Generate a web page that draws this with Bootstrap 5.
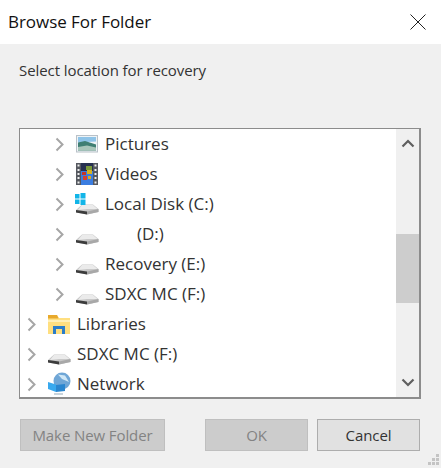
<!DOCTYPE html>
<html lang="en">
<head>
<meta charset="utf-8">
<title>Browse For Folder</title>
<link href="https://cdn.jsdelivr.net/npm/bootstrap@5.3.0/dist/css/bootstrap.min.css" rel="stylesheet">
<style>
html,body{height:100%;}
body{background:#f0f0f0;font-family:"Open Sans","Noto Sans",sans-serif;color:#222;overflow:hidden;}
.dlg{width:441px;height:468px;}
.titlebar{height:44px;background:#fff;padding:0 15px 0 8px;}
.titletext{font-size:17px;color:#111;letter-spacing:-.05px;}
.prompt{font-size:15px;margin:18px 0 0 19px;height:66px;line-height:17px;color:#333;letter-spacing:-.08px;}
.treebox{margin-left:19px;width:402px;height:271px;background:#fff;border:1px solid #8c8c8c;border-bottom-width:2px;border-right-width:2px;}
.treelist{width:376px;}
.treerow{height:30px;font-size:17px;color:#333;white-space:nowrap;}
.lvl0{padding-left:7px;}
.lvl1{padding-left:35px;}
.chev{width:9px;height:15px;flex:none;margin-right:11px;}
.ico{width:24px;height:24px;flex:none;margin-right:6px;}
.gap-d{padding-left:32px;}
.sbar{width:23px;background:#f0f0f0;}
.sarrow{height:30px;}
.strack{height:209px;}
.sthumb{height:69px;margin-top:75px;background:#cdcdcd;}
.footer{padding:20px 21px 0 20px;}
.dbtn{height:32px;border-radius:0;font-size:15px;padding:0;line-height:30px;letter-spacing:-.1px;}
.dbtn:disabled{background:#cccccc;border:1px solid #bfbfbf;color:#838383;opacity:1;}
.wide{width:145px;margin-right:40px;}
.mid{width:103px;margin-right:9px;}
.cancel{background:#e1e1e1;border:1px solid #adadad;color:#333;}
.grip{position:absolute;right:1px;bottom:2px;}
</style>
</head>
<body class="m-0">
<div class="dlg position-relative d-flex flex-column">
  <div class="titlebar d-flex align-items-center justify-content-between">
    <span class="titletext">Browse For Folder</span>
    <svg width="16" height="16" viewBox="0 0 16 16"><path d="M.5.5l15 15M15.500.5l-15 15" stroke="#222" stroke-width="1" fill="none"/></svg>
  </div>
  <div class="prompt">Select location for recovery</div>
  <svg width="0" height="0" class="position-absolute">
    <defs>
      <symbol id="chev" viewBox="0 0 9 15"><path d="M1.500 1.500 7.500 7.500 1.500 13.500" fill="none" stroke="#a6a6a6" stroke-width="2"/></symbol>
      <symbol id="drive" viewBox="0 0 24 24">
        <path d="M1 18 7 12.500H18L23.500 17V20L12 22.500 1 20.500Z" fill="#c9c9c9"/>
        <path d="M7 13H18L22.500 17H12L3 18Z" fill="#ebebeb"/>
        <path d="M1 18 12 19.500V22.500L1 20.500Z" fill="#3c3c3c"/>
        <path d="M12 19.500 23.500 17V20L12 22.500Z" fill="#a8a8a8"/>
      </symbol>
    </defs>
  </svg>
  <div class="treebox d-flex">
    <ul class="treelist list-unstyled m-0">
      <li class="treerow lvl1 d-flex align-items-center">
        <svg class="chev"><use href="#chev"/></svg>
        <svg class="ico" viewBox="0 0 24 24"><rect x="1.500" y="3.500" width="21" height="16.500" fill="#eef3f6" stroke="#b9c1c8"/><path d="M3 5H21V9.500L3 10.500Z" fill="#8fc4e8"/><path d="M3 10.500 10 9 21 12.500V18.500H3Z" fill="#3f7f73"/><path d="M3 15 12 13.500 21 15.500V18.500H3Z" fill="#a9c6ba"/></svg>
        <span>Pictures</span>
      </li>
      <li class="treerow lvl1 d-flex align-items-center">
        <svg class="chev"><use href="#chev"/></svg>
        <svg class="ico" viewBox="0 0 24 24"><rect x="1" y="1" width="22" height="22" fill="#55585f"/><rect x="6" y="1" width="12" height="8" fill="#26304f"/><rect x="6" y="9" width="12" height="14" fill="#3b7de0"/><rect x="11" y="4" width="6" height="4" fill="#7a9a3a"/><rect x="12" y="8" width="5" height="4" fill="#d8b21f"/><rect x="7" y="10" width="4" height="3" fill="#c5342a"/><rect x="8" y="14" width="4" height="4" fill="#d6402f"/><rect x="13" y="14" width="3" height="3" fill="#e0a91c"/><g fill="#eeeeee"><rect x="2.500" y="2.500" width="2" height="2"/><rect x="2.500" y="7" width="2" height="2"/><rect x="2.500" y="11" width="2" height="2"/><rect x="2.500" y="15" width="2" height="2"/><rect x="2.500" y="19.500" width="2" height="2"/><rect x="19.500" y="2.500" width="2" height="2"/><rect x="19.500" y="7" width="2" height="2"/><rect x="19.500" y="11" width="2" height="2"/><rect x="19.500" y="15" width="2" height="2"/><rect x="19.500" y="19.500" width="2" height="2"/></g></svg>
        <span>Videos</span>
      </li>
      <li class="treerow lvl1 d-flex align-items-center">
        <svg class="chev"><use href="#chev"/></svg>
        <svg class="ico" viewBox="0 0 24 24"><use href="#drive"/><g fill="#12b5e8"><rect x="0" y="2" width="4.500" height="4.500"/><rect x="5.500" y="1" width="5" height="5.500"/><rect x="0" y="7.500" width="4.500" height="4.500"/><rect x="5.500" y="7.500" width="5" height="5.500"/></g></svg>
        <span>Local Disk (C:)</span>
      </li>
      <li class="treerow lvl1 d-flex align-items-center">
        <svg class="chev"><use href="#chev"/></svg>
        <svg class="ico" viewBox="0 0 24 24"><use href="#drive"/></svg>
        <span class="gap-d">(D:)</span>
      </li>
      <li class="treerow lvl1 d-flex align-items-center">
        <svg class="chev"><use href="#chev"/></svg>
        <svg class="ico" viewBox="0 0 24 24"><use href="#drive"/></svg>
        <span>Recovery (E:)</span>
      </li>
      <li class="treerow lvl1 d-flex align-items-center">
        <svg class="chev"><use href="#chev"/></svg>
        <svg class="ico" viewBox="0 0 24 24"><use href="#drive"/></svg>
        <span>SDXC MC (F:)</span>
      </li>
      <li class="treerow lvl0 d-flex align-items-center">
        <svg class="chev"><use href="#chev"/></svg>
        <svg class="ico" viewBox="0 0 24 24"><path d="M1 3H10L12 6H23V22H1Z" fill="#ffdf80"/><path d="M1 3H10L11.500 6.500H1Z" fill="#e8a92c"/><path d="M1 8H23V10H1Z" fill="#fff0b8"/><path d="M6 22V14H18V22H15V17H9V22Z" fill="#2b7dc8"/></svg>
        <span>Libraries</span>
      </li>
      <li class="treerow lvl0 d-flex align-items-center">
        <svg class="chev"><use href="#chev"/></svg>
        <svg class="ico" viewBox="0 0 24 24"><use href="#drive"/></svg>
        <span>SDXC MC (F:)</span>
      </li>
      <li class="treerow lvl0 d-flex align-items-center">
        <svg class="chev"><use href="#chev"/></svg>
        <svg class="ico" viewBox="0 0 24 24"><circle cx="15" cy="9" r="8.500" fill="#6fa6d6"/><path d="M11 2.500 18 3.500 22 10 15 7Z" fill="#cfe7f6"/><path d="M1 10 9 12.500V20L1 17Z" fill="#39a9ee"/><path d="M9 13 18 12V19L9 20Z" fill="#2a86cf"/><path d="M7 21H16V23H7Z" fill="#c9d4dc"/></svg>
        <span>Network</span>
      </li>
    </ul>
    <div class="sbar ms-auto d-flex flex-column">
      <div class="sarrow d-flex align-items-center justify-content-center"><svg width="14" height="9" viewBox="0 0 14 9"><path d="M1.500 7.500 7 2 12.500 7.500" fill="none" stroke="#5f5f5f" stroke-width="2.200"/></svg></div>
      <div class="strack"><div class="sthumb"></div></div>
      <div class="sarrow d-flex align-items-center justify-content-center"><svg width="14" height="9" viewBox="0 0 14 9"><path d="M1.500 1.500 7 7 12.500 1.500" fill="none" stroke="#5f5f5f" stroke-width="2.200"/></svg></div>
    </div>
  </div>
  <div class="footer d-flex">
    <button type="button" class="btn dbtn wide" disabled>Make New Folder</button>
    <button type="button" class="btn dbtn mid" disabled>OK</button>
    <button type="button" class="btn dbtn mid cancel m-0">Cancel</button>
  </div>
  <svg class="grip" width="12" height="12" viewBox="0 0 12 12"><g fill="#c4c4c4"><rect x="8" y="0" width="3" height="3"/><rect x="4" y="4" width="3" height="3"/><rect x="8" y="4" width="3" height="3"/><rect x="0" y="8" width="3" height="3"/><rect x="4" y="8" width="3" height="3"/><rect x="8" y="8" width="3" height="3"/></g></svg>
</div>
<script src="https://cdn.jsdelivr.net/npm/bootstrap@5.3.0/dist/js/bootstrap.bundle.min.js"></script>
</body>
</html>
